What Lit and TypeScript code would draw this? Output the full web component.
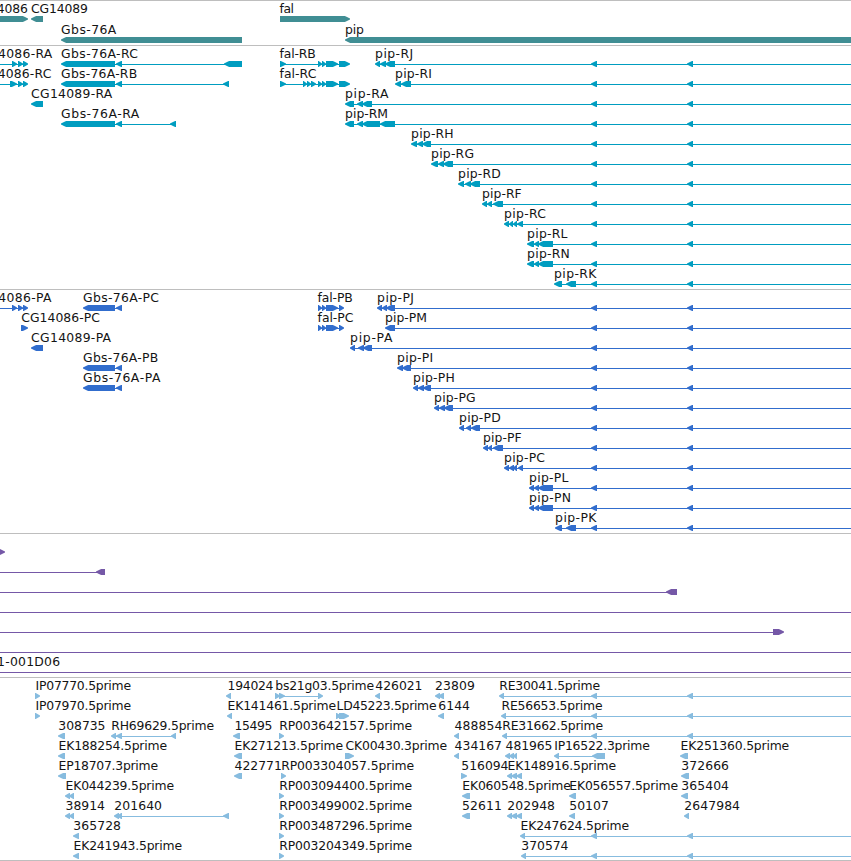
import { LitElement, html, svg, css } from "lit";
import { customElement, property } from "lit/decorators.js";

type Span = [number, number];

interface Feature {
  dir: "l" | "r";
  label: string;
  // left and right edge of the label
  text: Span;
  blocks: Span[];
  // intron line, only drawn when given
  line?: Span;
}

interface Track {
  name: string;
  rowHeight: number;
  rows: Feature[][];
}

const END = 851;

const left = (label: string, text: Span, blocks: Span[], line?: Span): Feature => ({ dir: "l", label, text, blocks, line });
const right = (label: string, text: Span, blocks: Span[], line?: Span): Feature => ({ dir: "r", label, text, blocks, line });

// transcripts that continue past the right edge share the same two exons
const SHARED: Span[] = [[591, 597], [687, 693]];
const long = (label: string, text: Span, blocks: Span[]): Feature =>
  left(label, text, [...blocks, ...SHARED], [blocks[0][0] + 3, END]);

const est = (label: string, start: number): Feature =>
  right(label, [start + 0.7, start + 132.5], [[start, start + 5]]);

const TRACKS: Track[] = [
  {
    name: "gene",
    rowHeight: 21,
    rows: [
      [
        right("CG14086", [-28.5, 27.3], [[-40, 28]]),
        left("CG14089", [31.5, 87.5], [[31, 43]]),
        right("fal", [280, 293.5], [[280, 350]]),
      ],
      [left("Gbs-76A", [61.5, 115.7], [[61, 242]]), left("pip", [345.5, 363.3], [[345, 860]])],
    ],
  },
  {
    name: "mrna",
    rowHeight: 20,
    rows: [
      [
        right("CG14086-RA", [-28.5, 51.8], [[12, 17], [18, 23], [23, 28]], [0, 25]),
        left("Gbs-76A-RC", [61.5, 137.4], [[61, 115], [116, 122], [224, 242]], [112, 240]),
        right("fal-RB", [280, 315.2], [[280, 286], [318, 322], [322, 326], [326, 338], [339, 350]], [280, 345]),
        long("pip-RJ", [375.5, 412.7], [[375, 380], [380, 386], [385, 395]]),
      ],
      [
        right("CG14086-RC", [-28.5, 50.8], [[10, 17], [18, 23], [23, 28]], [0, 25]),
        left("Gbs-76A-RB", [61.5, 136.7], [[61, 115], [116, 122], [223, 229]], [112, 228]),
        right("fal-RC", [280, 315.8], [[280, 286], [303, 307], [307, 311], [311, 316], [318, 322], [322, 326], [326, 338], [339, 350]], [280, 345]),
        long("pip-RI", [395.5, 431.5], [[395, 401], [401, 411]]),
      ],
      [
        left("CG14089-RA", [31.5, 111.8], [[31, 43]]),
        long("pip-RA", [345.5, 388], [[345, 354], [357, 363], [362, 372]]),
      ],
      [
        left("Gbs-76A-RA", [61.5, 138.8], [[61, 115], [116, 122], [170, 176]], [112, 175]),
        long("pip-RM", [345.5, 387.5], [[345, 354], [357, 363], [362, 380], [380, 395]]),
      ],
      [long("pip-RH", [411.5, 453.2], [[411, 417], [417, 423], [422, 431]])],
      [long("pip-RG", [431.5, 473.5], [[431, 438], [438, 444], [443, 453]])],
      [long("pip-RD", [458.5, 500.2], [[458, 464], [465, 471], [470, 480]])],
      [long("pip-RF", [482.5, 521.2], [[482, 487], [487, 492], [493, 503]])],
      [long("pip-RC", [504.5, 545.4], [[504, 509], [509, 513], [513, 517], [517, 523]])],
      [long("pip-RL", [527.5, 567], [[527, 534], [534, 539], [538, 553]])],
      [long("pip-RN", [527.5, 569.3], [[527, 534], [534, 539], [538, 553]])],
      [long("pip-RK", [554.5, 596], [[554, 562], [566, 576]])],
    ],
  },
  {
    name: "cds",
    rowHeight: 20,
    rows: [
      [
        right("CG14086-PA", [-28.5, 51], [[12, 17], [18, 23], [23, 28]], [0, 25]),
        left("Gbs-76A-PC", [83.5, 158.4], [[83, 115], [116, 122]], [112, 120]),
        right("fal-PB", [318, 352.3], [[318, 322], [322, 326], [326, 338], [339, 344]], [320, 342]),
        long("pip-PJ", [377.5, 413.5], [[377, 382], [382, 387], [386, 395]]),
      ],
      [
        right("CG14086-PC", [21.7, 99.3], [[21, 28]]),
        right("fal-PC", [318, 352.8], [[318, 322], [322, 326], [326, 338], [339, 344]], [320, 342]),
        long("pip-PM", [385.5, 426.5], [[385, 395]]),
      ],
      [
        left("CG14089-PA", [31.5, 110.6], [[31, 43]]),
        long("pip-PA", [350.5, 392], [[350, 355], [358, 364], [363, 372]]),
      ],
      [
        left("Gbs-76A-PB", [83.5, 157.8], [[83, 115], [116, 122]], [112, 120]),
        long("pip-PI", [397.5, 432.7], [[397, 403], [402, 411]]),
      ],
      [
        left("Gbs-76A-PA", [83.5, 160], [[83, 115], [116, 122]], [112, 120]),
        long("pip-PH", [413.5, 454.4], [[413, 418], [418, 424], [423, 431]]),
      ],
      [long("pip-PG", [434.5, 475.2], [[434, 439], [439, 445], [444, 453]])],
      [long("pip-PD", [459.5, 500.2], [[459, 464], [466, 471], [471, 480]])],
      [long("pip-PF", [483.5, 521.2], [[483, 488], [488, 492], [493, 503]])],
      [long("pip-PC", [504.5, 544.5], [[504, 509], [509, 514], [513, 517], [518, 523]])],
      [long("pip-PL", [529.5, 568], [[529, 534], [534, 539], [538, 553]])],
      [long("pip-PN", [529.5, 570.5], [[529, 534], [534, 539], [538, 553]])],
      [long("pip-PK", [555.5, 596], [[555, 562], [566, 576]])],
    ],
  },
  {
    name: "bac",
    rowHeight: 20,
    rows: [
      [right("", [0, 0], [[-5, 5]])],
      [left("", [0, 0], [[96, 105]], [0, 100])],
      [left("", [0, 0], [[666, 677]], [0, 672])],
      [left("", [0, 0], [], [0, END])],
      [right("", [0, 0], [[773, 784]], [0, 780])],
      [left("", [0, 0], [], [0, END])],
      [left("1-001D06", [-2.5, 59.6], [], [0, END])],
    ],
  },
  {
    name: "est",
    rowHeight: 20,
    rows: [
      [
        right("IP07770.5prime", [36, 130.5], [[35, 40]]),
        left("194024", [228, 273], [[226, 231]]),
        right("bs21g03.5prime", [275.7, 373.5], [[275, 280], [279, 285], [318, 323]], [277, 321]),
        left("426021", [375.7, 422], [[375, 380]]),
        left("23809", [435.5, 474.5], [[435, 440], [438, 444]]),
        long("RE30041.5prime", [499.7, 599.5], [[499, 504]]),
      ],
      [
        right("IP07970.5prime", [36, 130.5], [[35, 40]]),
        left("EK141461.5prime", [228, 335.5], [[227, 232]]),
        right("LD45223.5prime", [337, 436], [[336, 341], [339, 349]]),
        left("6144", [438.7, 469.5], [[438, 444]]),
        long("RE56653.5prime", [502, 602], [[501, 506]]),
      ],
      [
        left("308735", [58.7, 105], [[58, 65]]),
        left("RH69629.5prime", [111.7, 213.5], [[111, 116], [116, 122], [171, 176]], [114, 175]),
        left("15495", [235, 272], [[233, 240]]),
        est("RP003642157.5prime", 279),
        left("488854", [455, 502], [[454, 459]]),
        long("RE31662.5prime", [502.7, 602.5], [[502, 507]]),
      ],
      [
        left("EK188254.5prime", [59, 166.5], [[58, 65]]),
        left("EK271213.5prime", [235, 342.5], [[234, 242]]),
        right("CK00430.3prime", [346, 446.5], [[345, 354]]),
        left("434167", [455, 501.5], [[454, 459]]),
        left("481965", [506, 552], [[505, 510], [509, 514], [513, 517]]),
        left("IP16522.3prime", [554.7, 649.3], [[554, 559], [592, 605]], [557, 600]),
        left("EK251360.5prime", [681, 788.7], [[680, 688]]),
      ],
      [
        left("EP18707.3prime", [59, 157.5], [[58, 66]]),
        left("422771", [235, 281.3], [[234, 242]]),
        est("RP003304057.5prime", 281),
        right("516094", [461.7, 508], [[461, 467]]),
        left("EK148916.5prime", [508, 615.5], [[507, 512], [511, 517], [516, 522]]),
        left("372666", [681.7, 728.5], [[681, 689]]),
      ],
      [
        left("EK044239.5prime", [66, 173.5], [[65, 70], [69, 74]]),
        est("RP003094400.5prime", 279),
        left("EK060548.5prime", [462.7, 570.3], [[462, 470]]),
        left("EK056557.5prime", [569.7, 677.5], [[569, 576]]),
        left("365404", [681.7, 728.5], [[681, 688]]),
      ],
      [
        left("38914", [66, 104.5], [[65, 70], [69, 74]]),
        left("201640", [114.7, 161.5], [[114, 119], [117, 122], [223, 229]], [117, 228]),
        est("RP003499002.5prime", 279),
        left("52611", [462.5, 501.5], [[462, 470]]),
        left("202948", [507.7, 554.5], [[507, 512], [511, 517], [516, 522]]),
        left("50107", [569.7, 608.3], [[569, 575]]),
        left("2647984", [684.7, 739.5], [[684, 689]]),
      ],
      [
        left("365728", [73.7, 120.5], [[73, 79]]),
        est("RP003487296.5prime", 279),
        long("EK247624.5prime", [521, 628.5], [[520, 525]]),
      ],
      [
        left("EK241943.5prime", [74, 181.5], [[73, 79]]),
        est("RP003204349.5prime", 279),
        long("370574", [521.7, 568], [[521, 526]]),
      ],
    ],
  },
];

@customElement("feature-track")
export class FeatureTrack extends LitElement {
  @property({ attribute: false }) track!: Track;

  static styles = css`
    :host {
      display: block;
    }
    .row {
      display: block;
      width: 100%;
      margin-bottom: -1px;
      overflow: hidden;
    }
    .shape {
      fill: var(--track-color);
    }
    .label {
      fill: #141414;
      font-family: "DejaVu Sans", sans-serif;
      font-size: 12.4px;
    }
  `;

  render() {
    const h = this.track.rowHeight;
    return html`${this.track.rows.map(
      (row) => html`
        <svg class="row" height=${h + 1}>
          ${row.map((f) => this._feature(f))}
        </svg>
      `
    )}`;
  }

  private _feature(f: Feature) {
    return svg`
      ${f.line
        ? svg`<rect class="shape" x=${f.line[0]} y="18" width=${f.line[1] - f.line[0]} height="1"></rect>`
        : ""}
      ${f.blocks.map((b) => svg`<polygon class="shape" points=${this._arrow(b, f.dir)}></polygon>`)}
      ${f.label
        ? svg`<text class="label" x=${f.text[0] - 0.4} y="12" textLength=${f.text[1] - f.text[0] + 0.9}>${f.label}</text>`
        : ""}
    `;
  }

  // block with a rounded-off point on the side it reads towards
  private _arrow([a, b]: Span, dir: "l" | "r") {
    const tip = Math.min(6, b - a);
    const from = dir === "l" ? a : b;
    const back = dir === "l" ? b : a;
    const s = dir === "l" ? 1 : -1;
    const mid = from + s * tip * 0.5;
    const full = from + s * tip * 0.85;
    return `${from},17.4 ${mid},15.9 ${full},15 ${back},15 ${back},21 ${full},21 ${mid},20.1 ${from},18.6`;
  }
}

@customElement("app-root")
export class AppRoot extends LitElement {
  static styles = css`
    :host {
      display: flex;
      flex-direction: column;
      box-sizing: border-box;
      width: 851px;
      height: 861px;
      overflow: hidden;
      background: #fff;
      border-bottom: 1px solid #bebebe;
    }
    feature-track {
      border-top: 1px solid #bebebe;
      padding-bottom: 3px;
    }
    .gene {
      --track-color: #408e94;
      padding-bottom: 2px;
    }
    .mrna {
      --track-color: #009dc0;
    }
    .cds {
      --track-color: #316dcd;
    }
    .bac {
      --track-color: #7558a7;
    }
    .est {
      --track-color: #87bcdf;
    }
  `;

  render() {
    return html`${TRACKS.map((t) => html`<feature-track class=${t.name} .track=${t}></feature-track>`)}`;
  }
}
